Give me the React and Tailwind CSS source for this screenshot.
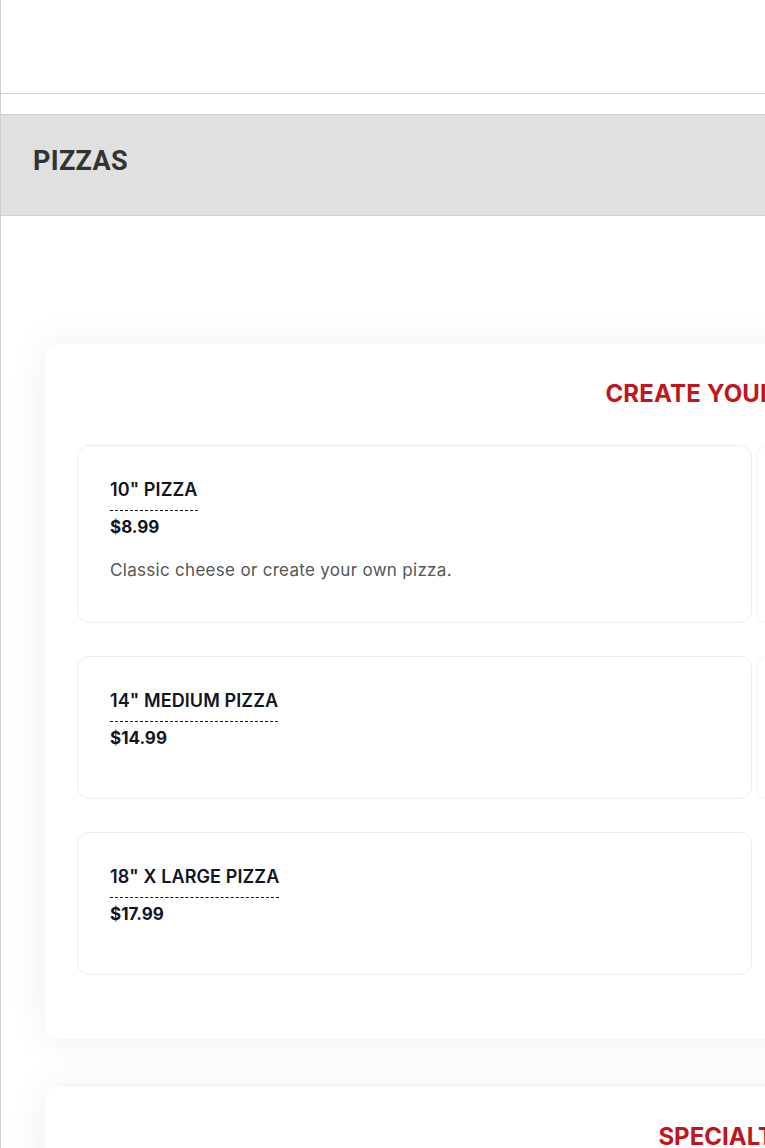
import React from 'react';

const items = [
    { name: '10" PIZZA', price: '$8.99', desc: 'Classic cheese or create your own pizza.' },
    { name: '14" MEDIUM PIZZA', price: '$14.99' },
    { name: '18" X LARGE PIZZA', price: '$17.99' },
];

function ItemCard({ item }) {
    return (
        <div className="bg-white border border-[#ececec] rounded-xl px-8 pt-[31px] pb-[40px]">
            <h3 className="inline-block text-[18px] leading-[26px] font-semibold text-[#111322] border-b border-dashed border-[#111] pb-[7px] tracking-[0.1px]">
                {item.name}
            </h3>
            <p className="text-[17px] leading-[24px] font-bold text-[#111322] mt-[4px] mb-2">{item.price}</p>
            {item.desc && (
                <p className="text-[17px] leading-[24px] text-[#555] mt-[19px] tracking-[0.3px]">{item.desc}</p>
            )}
        </div>
    );
}

export default function App() {
    return (
        <div className="w-[765px] h-[1148px] overflow-hidden bg-white" style={{ fontFamily: 'Inter, "Open Sans", sans-serif' }}>
            <div className="w-[1600px] border-l border-[#cfcfcf]">
                {/* top box */}
                <div className="h-[94px] border-b border-[#cfcfcf]" />

                {/* section header */}
                <div className="mt-5 h-[102px] bg-[#e0e0e0] border-y border-[#cfcfcf] px-8 pb-2 flex items-center">
                    <h2 className="text-[27px] font-bold text-[#333] tracking-[0.3px]" style={{ fontFamily: 'Roboto, "Liberation Sans", sans-serif' }}>
                        PIZZAS
                    </h2>
                </div>

                <div className="pl-[44px] pt-[128px]">
                    {/* Create your own */}
                    <div className="w-[1438px] bg-white rounded-xl shadow-[0_0_40px_rgba(0,0,0,0.07)] px-8 pt-[34px] pb-16">
                        <h2 className="text-center text-[24px] leading-[32px] font-bold text-[#c0161c] mb-[35px] tracking-[0.2px]">
                            CREATE YOUR OWN PIZZA
                        </h2>
                        <div className="grid grid-cols-[675px_675px] gap-x-[4px]">
                            <div className="flex flex-col gap-[33px]">
                                {items.map((it) => (
                                    <ItemCard key={it.name} item={it} />
                                ))}
                            </div>
                            <div className="flex flex-col gap-[33px]">
                                <div className="h-[178px] border border-[#f2f2f2] rounded-xl" />
                                <div className="h-[143px] border border-[#f2f2f2] rounded-xl" />
                            </div>
                        </div>
                    </div>

                    {/* Specialty */}
                    <div className="w-[1438px] mt-12 bg-white rounded-xl shadow-[0_0_40px_rgba(0,0,0,0.07)] px-8 pt-[34px] pb-16 h-[400px]">
                        <h2 className="text-center text-[24px] leading-[32px] font-bold text-[#c0161c]">
                            SPECIALTY PIZZA
                        </h2>
                    </div>
                </div>
            </div>
        </div>
    );
}
